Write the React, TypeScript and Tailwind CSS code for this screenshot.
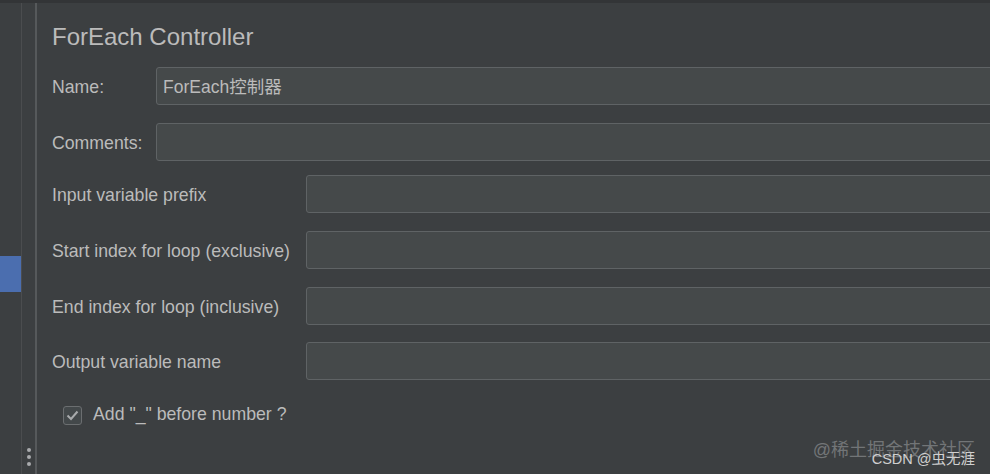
import React from "react";

const font = { fontFamily: '"Liberation Sans", Arial, "Noto Sans CJK SC", sans-serif' };

function Row({ label, labelW, value, mt }: { label: string; labelW: string; value?: string; mt: string }) {
  return (
    <div className={`flex items-center ${mt} -mr-[20px]`}>
      <div className={`${labelW} shrink-0 text-[17.7px] pt-[3px] text-[#bbbbbb]`}>{label}</div>
      <div className="flex-1 h-[38px] rounded-[3px] border border-[#5f6365] bg-[#45494a] flex items-center pl-[6px] pt-[2px] text-[17.5px] text-[#bbbbbb]">
        {value}
      </div>
    </div>
  );
}

export default function App() {
  return (
    <div className="w-[990px] h-[474px] bg-[#3c3f41] flex overflow-hidden relative border-t-[3px] border-[#333537]" style={font}>
      {/* left tree */}
      <div className="w-[22px] shrink-0 flex flex-col border-r border-[#4b4d4f]">
        <div className="h-[253px]" />
        <div className="h-[36px] bg-[#4b6eaf]" />
      </div>
      {/* splitter */}
      <div className="w-[13px] shrink-0 flex flex-col justify-end items-center pb-[8px] gap-[3px]">
        <div className="w-[4px] h-[4px] rounded-full bg-[#a9abad]" />
        <div className="w-[4px] h-[4px] rounded-full bg-[#a9abad]" />
        <div className="w-[4px] h-[4px] rounded-full bg-[#a9abad]" />
      </div>
      <div className="w-[2px] shrink-0 bg-[#56595b]" />
      {/* main */}
      <div className="flex-1 pl-[15px] pt-[19px] flex flex-col min-w-0">
        <div className="text-[24px] leading-[30px] text-[#bbbbbb]">ForEach Controller</div>
        <Row label="Name:" labelW="w-[104px]" value="ForEach控制器" mt="mt-[15px]" />
        <Row label="Comments:" labelW="w-[104px]" mt="mt-[18px]" />
        <Row label="Input variable prefix" labelW="w-[254px]" mt="mt-[14px]" />
        <Row label="Start index for loop (exclusive)" labelW="w-[254px]" mt="mt-[18px]" />
        <Row label="End index for loop (inclusive)" labelW="w-[254px]" mt="mt-[18px]" />
        <Row label="Output variable name" labelW="w-[254px]" mt="mt-[17px]" />
        <div className="flex items-center mt-[23px] pl-[11px]">
          <div className="w-[19px] h-[19px] rounded-[3px] border border-[#6b6e70] bg-[#43484a] flex items-center justify-center">
            <svg width="13" height="11" viewBox="0 0 13 11">
              <path d="M1.5 5.5 L5 9 L11.5 1.5" fill="none" stroke="#a8aaac" strokeWidth="2" />
            </svg>
          </div>
          <div className="ml-[11px] text-[17.7px] text-[#bbbbbb] -mt-[2px]">Add "_" before number ?</div>
        </div>
      </div>
      {/* watermarks */}
      <div className="absolute right-[15px] top-[434px] text-[18px] text-[#8a8c8e] opacity-70">@稀土掘金技术社区</div>
      <div className="absolute right-[15px] top-[446px] text-[14.5px] text-[#d0d0d0]">CSDN @虫无涯</div>
    </div>
  );
}
